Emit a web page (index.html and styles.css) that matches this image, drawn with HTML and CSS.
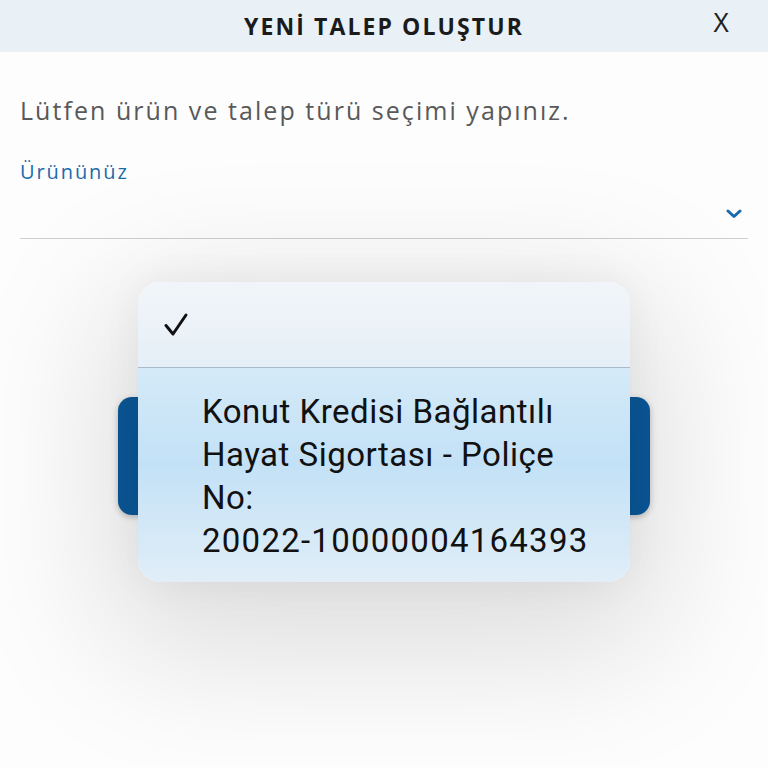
FILE: index.html
```html
<!DOCTYPE html>
<html lang="tr">
<head>
<meta charset="utf-8">
<link rel="stylesheet" href="styles.css">
</head>
<body>
<div class="screen">
  <header class="topbar">
    <h1 class="title">YENİ TALEP OLUŞTUR</h1>
    <span class="close">X</span>
  </header>
  <main class="content">
    <p class="intro">Lütfen ürün ve talep türü seçimi yapınız.</p>
    <div class="field">
      <div class="label">Ürününüz</div>
      <div class="select">
        <svg class="chev" width="16" height="10" viewBox="0 0 16 10"><path d="M2 2 L8 7.5 L14 2" fill="none" stroke="#1a6aaa" stroke-width="3" stroke-linecap="round" stroke-linejoin="round"/></svg>
      </div>
    </div>
    <div class="button"></div>
  </main>
  <div class="popup">
    <div class="opt-top">
      <svg class="check" width="26" height="26" viewBox="0 0 26 26"><path d="M3 13.5 L10 22 L23 3" fill="none" stroke="#111" stroke-width="3" stroke-linecap="round" stroke-linejoin="round"/></svg>
    </div>
    <div class="opt-main">Konut Kredisi Bağlantılı Hayat Sigortası - Poliçe No: <span class="nowrap">20022-10000004164393</span></div>
  </div>
</div>
</body>
</html>
```
FILE: styles.css
```css
* { box-sizing: border-box; }
html, body { margin: 0; padding: 0; }
body { width: 768px; height: 768px; overflow: hidden; background: #fff; }
.screen { position: relative; width: 768px; height: 768px; overflow: hidden; background: #fdfdfd; }
.topbar {
  height: 52px; background: #e9f0f6; display: flex; align-items: center; justify-content: center;
  position: relative;
}
.title {
  margin: 0; font-family: "Open Sans", sans-serif; font-weight: 700; font-size: 23px; color: #1b1b1b;
  letter-spacing: 2.1px;
}
.close {
  position: absolute; right: 38px; top: 8px; font-family: "Liberation Sans", sans-serif; font-weight: 300;
  font-size: 27px; color: #222; transform: scaleX(0.9);
}
.content { padding: 40px 20px 0; }
.intro {
  margin: 0; font-family: "Open Sans", sans-serif; font-size: 25px; color: #595959; letter-spacing: 2.05px;
  line-height: 36px;
}
.field { margin-top: 29px; }
.label { font-family: "Open Sans", sans-serif; font-size: 20px; color: #1a6aaa; line-height: 30px; letter-spacing: 1.9px; }
.select {
  height: 52px; border-bottom: 1.5px solid #cfcfcf; display: flex; justify-content: flex-end; align-items: center;
  padding-right: 6px; padding-top: 3px;
}
.button {
  margin: 158px 98px 0; height: 118px; background: #0b5a9c; border-radius: 14px;
  box-shadow: 0 2px 6px rgba(0,0,0,0.25);
}
.popup {
  position: absolute; left: 138px; top: 282px; width: 492px; height: 300px; border-radius: 22px; overflow: hidden;
  box-shadow: 0 40px 140px 30px rgba(0,0,0,0.13), 0 0 40px rgba(0,0,0,0.05);
  display: flex; flex-direction: column;
}
.opt-top {
  height: 86px; background: linear-gradient(#f1f5f9, #e6eff7); border-bottom: 1px solid #a7bccc;
  display: flex; align-items: center; padding-left: 25px;
}
.opt-main {
  flex: 1; background: linear-gradient(#d4eaf8 0%, #c3e1f6 45%, #e1eef8 100%);
  padding: 22px 20px 0 64px; font-family: "Roboto", sans-serif; font-size: 33px; line-height: 43px; color: #111;
  letter-spacing: 0.5px;
}
.nowrap { white-space: nowrap; letter-spacing: 1.25px; }
```
